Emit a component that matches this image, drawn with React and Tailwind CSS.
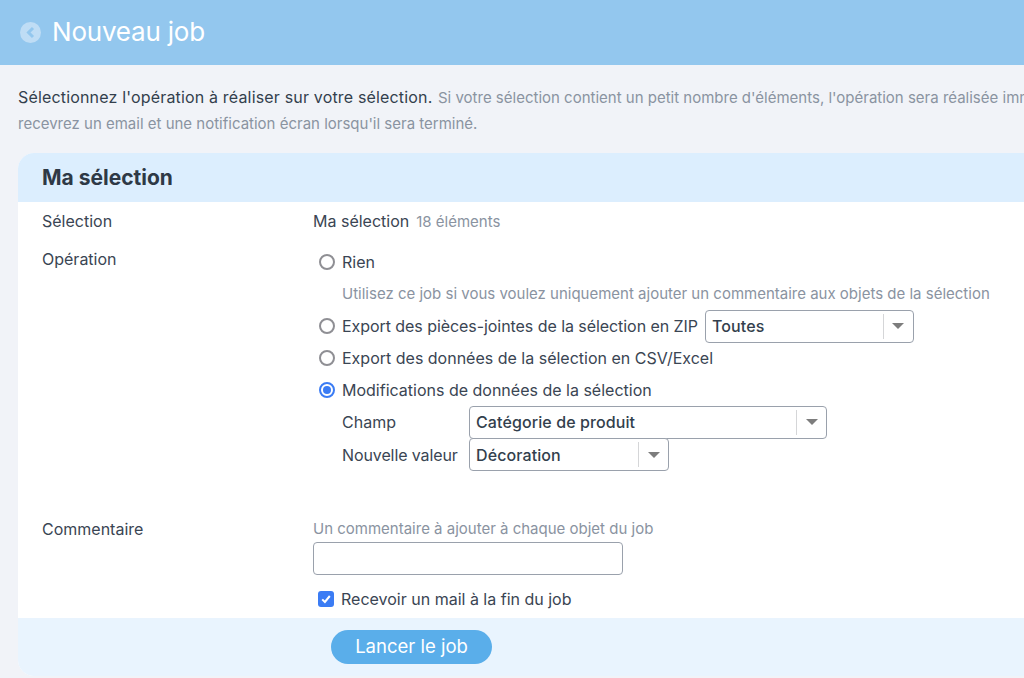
import React from 'react';

function Select({ value, width }) {
  return (
    <div className={`flex h-[33px] shrink-0 items-center rounded-[4px] border border-[#9aa1ac] bg-white pl-[6px] ${width}`}>
      <span className="flex-1 text-[16px] font-medium tracking-[0.1px] text-[#333f4d]">{value}</span>
      <span className="h-[25px] w-px bg-[#d5d6d8]" />
      <span className="flex w-[29px] justify-center">
        <span className="h-0 w-0 border-x-[6px] border-t-[6px] border-x-transparent border-t-[#7d7d7d]" />
      </span>
    </div>
  );
}

function Radio({ checked }) {
  if (checked) {
    return (
      <span className="mr-[7px] ml-[6px] flex h-4 w-4 shrink-0 items-center justify-center rounded-full border-[2px] border-[#3b7cf4] bg-white">
        <span className="h-2 w-2 rounded-full bg-[#3b7cf4]" />
      </span>
    );
  }
  return <span className="mr-[7px] ml-[6px] h-4 w-4 shrink-0 rounded-full border-[2px] border-[#8f8f94] bg-white" />;
}

export default function App() {
  return (
    <div className="h-[678px] w-[1024px] overflow-hidden bg-[#f1f3f8] font-['Inter',sans-serif] text-[16px] text-[#3a4553]">
      <div className="flex h-[65px] items-center bg-[#93c7ee] pl-[20px]">
        <span className="flex h-[21px] w-[21px] items-center justify-center rounded-full bg-[#bfddf5]">
          <svg width="11" height="13" viewBox="0 0 11 13" fill="none">
            <path d="M8 2 L3.5 6.5 L8 11" stroke="#93c7ee" strokeWidth="3" />
          </svg>
        </span>
        <h1 className="-mt-[2px] ml-[11px] text-[26px] font-normal tracking-[-0.2px] text-white">Nouveau job</h1>
      </div>

      <div className="w-[1300px] pt-[19px] pl-[18px] leading-[26px]">
        <p className="h-[27px] whitespace-nowrap text-[#8a93a1]">
          <span className="mr-[1px] text-[16px] font-normal tracking-[0.17px] text-[#333f4d]">Sélectionnez l'opération à réaliser sur votre sélection.</span>{' '}
          <span className="text-[15px]">Si votre sélection contient un petit nombre d'éléments, l'opération sera réalisée immédiatement. Sinon, un job sera créé et vous</span>
        </p>
        <p className="h-[25px] whitespace-nowrap text-[15px] text-[#8a93a1]">recevrez un email et une notification écran lorsqu'il sera terminé.</p>
      </div>

      <div className="mt-[17px] ml-[18px] w-[1100px] overflow-hidden rounded-l-[16px] bg-white">
        <div className="flex h-[49px] items-center bg-[#dceefe] pt-[1px] pl-[24px]">
          <h2 className="text-[21px] font-bold text-[#2e3946]">Ma sélection</h2>
        </div>

        <div className="flex h-[38px] items-center pl-[24px]">
          <div className="w-[271px]">Sélection</div>
          <div className="flex items-baseline">
            <span>Ma sélection</span>
            <span className="ml-[7px] text-[15px] text-[#8a93a1]">18 éléments</span>
          </div>
        </div>

        <div className="flex pl-[24px]">
          <div className="w-[271px] pt-[9px] leading-[20px]">Opération</div>
          <div className="flex flex-col pt-[6px]">
            <label className="flex h-[32px] items-center">
              <Radio />
              <span>Rien</span>
            </label>
            <div className="flex h-[32px] items-center pl-[29px] text-[15px] text-[#8a93a1]">
              Utilisez ce job si vous voulez uniquement ajouter un commentaire aux objets de la sélection
            </div>
            <label className="flex h-[32px] items-center">
              <Radio />
              <span className="tracking-[-0.06px]">Export des pièces-jointes de la sélection en ZIP</span>
              <span className="ml-[7px]">
                <Select value="Toutes" width="w-[209px]" />
              </span>
            </label>
            <label className="flex h-[32px] items-center">
              <Radio />
              <span>Export des données de la sélection en CSV/Excel</span>
            </label>
            <label className="flex h-[32px] items-center">
              <Radio checked />
              <span>Modifications de données de la sélection</span>
            </label>
            <div className="flex h-[32px] items-center pl-[29px]">
              <span className="w-[127px]">Champ</span>
              <Select value="Catégorie de produit" width="w-[358px]" />
            </div>
            <div className="flex h-[33px] items-center pl-[29px]">
              <span className="w-[127px] tracking-[-0.1px]">Nouvelle valeur</span>
              <Select value="Décoration" width="w-[200px]" />
            </div>
          </div>
        </div>

        <div className="mt-[48px] flex pl-[24px]">
          <div className="w-[271px] leading-[20px]">Commentaire</div>
          <div className="flex flex-col">
            <div className="text-[15px] leading-[20px] text-[#8a93a1]">Un commentaire à ajouter à chaque objet du job</div>
            <div className="mt-[3px] h-[33px] w-[310px] rounded-[4px] border border-[#9aa1ac] bg-white" />
            <label className="mt-[14px] flex h-[20px] items-center pl-[5px]">
              <span className="flex h-[16px] w-[16px] items-center justify-center rounded-[3px] bg-[#3b7cf4]">
                <svg width="12" height="12" viewBox="0 0 12 12" fill="none">
                  <path d="M2.2 6.4 L4.9 9 L9.8 3" stroke="white" strokeWidth="2" />
                </svg>
              </span>
              <span className="ml-[7px]">Recevoir un mail à la fin du job</span>
            </label>
          </div>
        </div>

        <div className="mt-[9px] h-[58px] bg-[#e9f4fe] pt-[12px] pl-[313px]">
          <button className="h-[34px] w-[161px] rounded-full bg-[#5aaeea] text-[18.5px] text-white">Lancer le job</button>
        </div>
      </div>
    </div>
  );
}
